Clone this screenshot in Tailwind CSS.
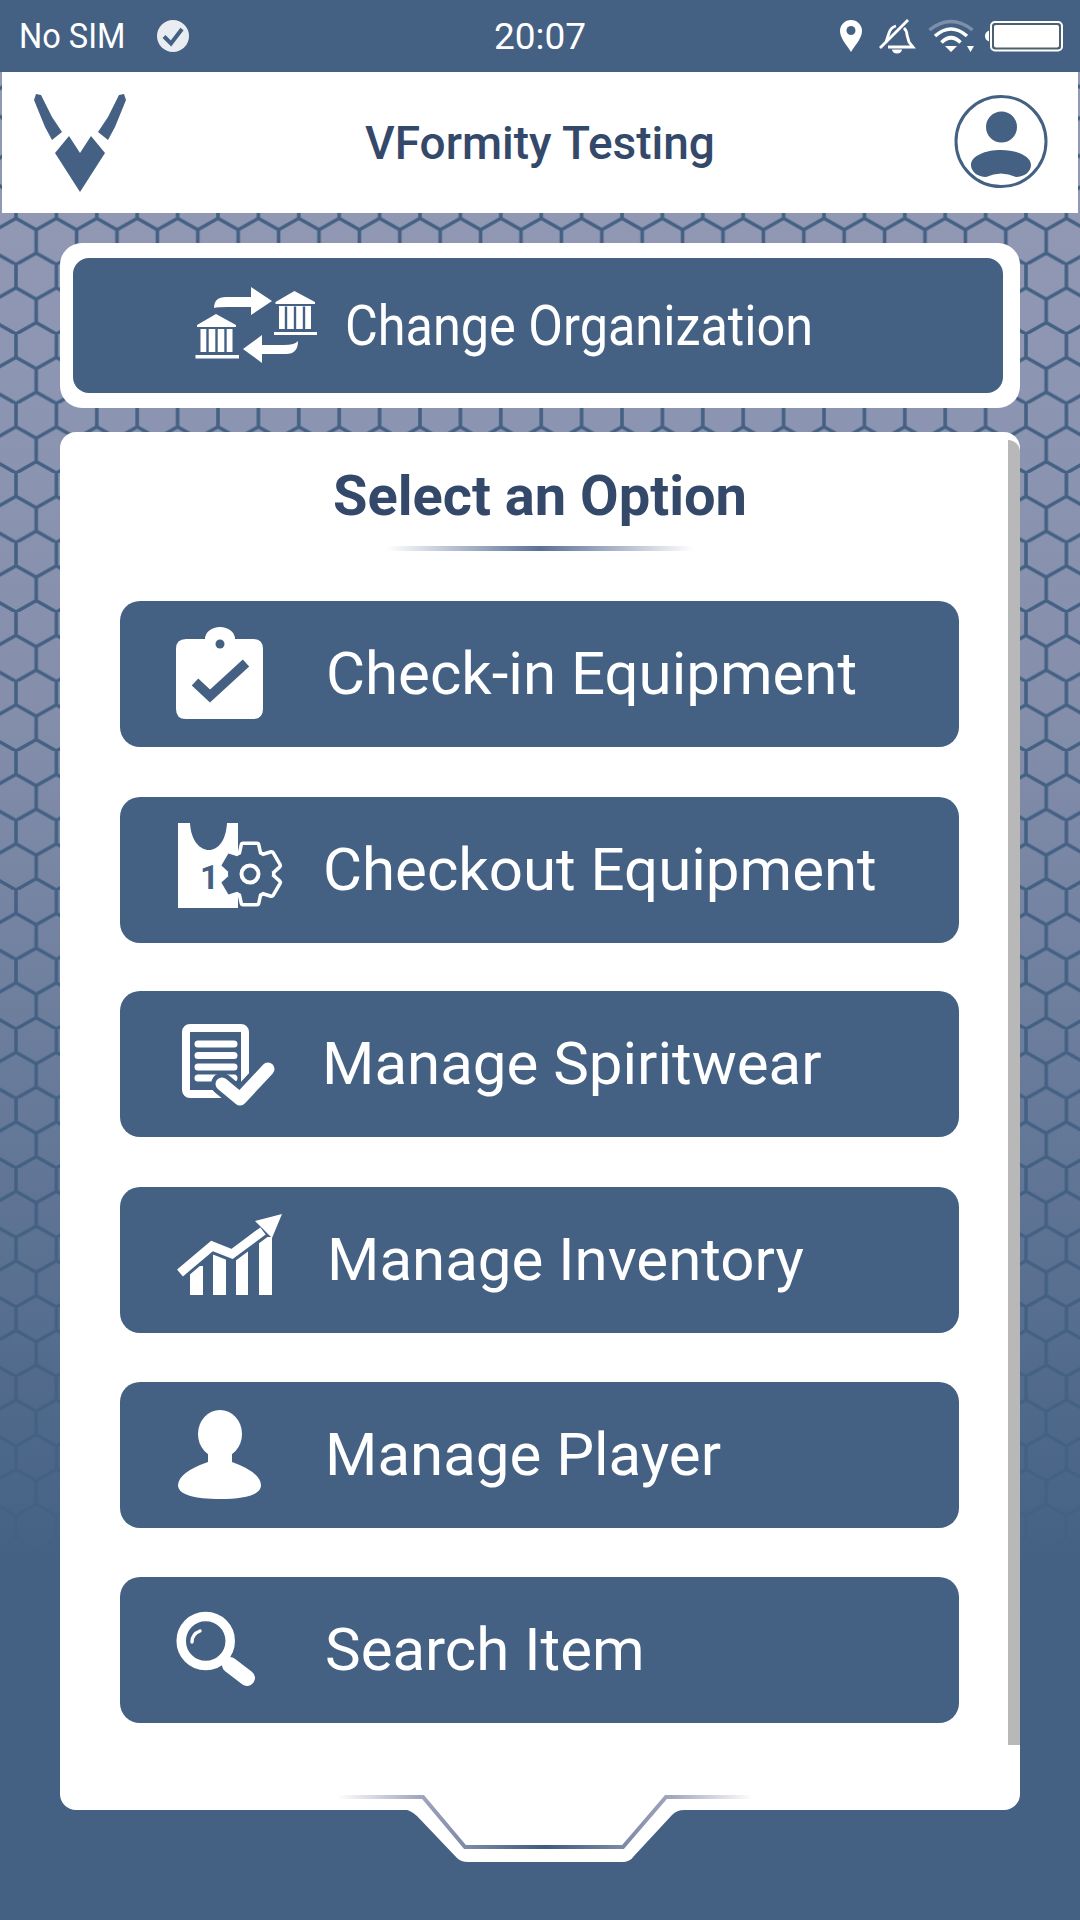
<!DOCTYPE html>
<html lang="en">
<head>
<meta charset="utf-8"/>
<meta content="width=device-width, initial-scale=1.0" name="viewport"/>
<title>VFormity Testing</title>
<script src="https://cdn.jsdelivr.net/npm/@tailwindcss/browser@4"></script>
</head>
<body class="[font-family:Roboto,sans-serif]">
<div class="relative w-[1080px] h-[1920px] overflow-hidden bg-[#446184]">

  <!-- hexagon background -->
  <div class="absolute inset-0 bg-[linear-gradient(to_bottom,#9098b4_213px,#858fac_700px,#446184_1560px)]"></div>
  <svg class="absolute inset-0" width="1080" height="1920">
    <defs>
      <pattern id="hex" patternUnits="userSpaceOnUse" x="16" y="264.5" width="40.4" height="69.5">
        <path d="M0 0V23.3L20.2 34.75V58.05L0 69.5M20.2 58.05L40.4 69.5M40.4 0V23.3L20.2 34.75" fill="none" stroke="#446184" stroke-width="3.6"/>
      </pattern>
    </defs>
    <rect width="1080" height="1920" fill="url(#hex)"/>
  </svg>

  <div class="relative flex flex-col">
    <!-- status bar -->
    <div class="h-[72px] bg-[#446184] flex items-center text-white">
      <div class="w-[240px] flex items-center pl-[19px]">
        <span class="text-[35px] leading-none origin-left scale-x-[.93] inline-block w-[122px] whitespace-nowrap">No SIM</span>
        <svg class="ml-[16px]" width="32" height="32" viewBox="157 20 32 32">
          <circle cx="173" cy="36" r="16" fill="#e9edf2"/>
          <path d="M164 36.5L171 43.5L182 29" fill="none" stroke="#446184" stroke-width="4"/>
        </svg>
      </div>
      <div class="flex-1 text-center text-[37px] leading-none">20:07</div>
      <svg class="shrink-0" width="240" height="72" viewBox="840 0 240 72">
        <path d="M851 52C846 44 840 38 840 31A11 11 0 0 1 862 31C862 38 856 44 851 52Z" fill="#fff"/>
        <circle cx="851" cy="30.5" r="4.5" fill="#446184"/>
        <path d="M908 20L880 48" stroke="#fff" stroke-width="2.8" fill="none"/>
        <path d="M886 42L889 33Q891 27 896 26M904 28Q907 31 907 35L909 42L913 47H888" stroke="#fff" stroke-width="2.8" fill="none"/>
        <path d="M892 49.5H902A5 4 0 0 1 892 49.5Z" fill="#fff"/>
        <path d="M929.5 30Q951 13 972.5 30" stroke="#fff" stroke-opacity=".3" stroke-width="3.5" fill="none"/>
        <path d="M935 36Q951 22 967 36M941.5 42.5Q951 33 960.5 42.5" stroke="#fff" stroke-width="3.6" fill="none"/>
        <path d="M945 46H957L951 52ZM967 46H974L970.5 52Z" fill="#fff"/>
        <rect x="991" y="22" width="71" height="28.5" rx="4" fill="#4d5e6c" stroke="#fff" stroke-width="2"/>
        <rect x="994" y="25" width="65" height="22.5" rx="2" fill="#fff"/>
        <path d="M989 30.5V41.5Q985 40 985 36T989 30.5Z" fill="#fff"/>
      </svg>
    </div>

    <!-- header -->
    <div class="mx-[2px] h-[141px] bg-white flex items-center justify-between">
      <svg width="140" height="141" viewBox="2 72 140 141">
        <path d="M36 94L41 95L52 117L62 132L52 140L45 127L34 100ZM124 94L119 95L108 117L98 132L108 140L115 127L126 100ZM80 192L55 153L69 136L80 153L91 136L105 153Z" fill="#446184"/>
      </svg>
      <div class="text-[46px] leading-none font-medium text-[#34496a] whitespace-nowrap">VFormity Testing</div>
      <svg width="140" height="141" viewBox="938 72 140 141">
        <circle cx="1001" cy="141.5" r="45" fill="none" stroke="#446184" stroke-width="3"/>
        <ellipse cx="1001.5" cy="127" rx="15.5" ry="15.5" fill="#446184"/>
        <path d="M971 165C971 156 985 150 1001 150S1031 156 1031 165C1031 172 1024 177 1016 177Q1001 170 986 177C978 177 971 172 971 165Z" fill="#446184"/>
      </svg>
    </div>

    <!-- change organization -->
    <div class="mt-[30px] mx-[60px] h-[165px] bg-white rounded-[22px] pl-[13px] pr-[17px] py-[15px]">
      <div class="h-full bg-[#446184] rounded-[16px] flex items-center">
        <svg class="shrink-0 ml-[107px]" width="140" height="135" viewBox="180 258 140 135">
          <g fill="#fff">
            <path d="M275.5 302L294.4 291L315 302V304H275.5ZM279 306H311V329H279ZM274 332H317V335H274Z"/>
            <path d="M197 325L216 314L236 325V327H197ZM200.5 329H232.5V352H200.5ZM195.5 355H239V358.5H195.5Z"/>
            <path d="M214 308Q214 297 226 297H251V287L272 301L251 315V307H228Q217 307 214 308Z"/>
            <path d="M298 341Q298 354 286 354H262V363L243 349L262 335V345H284Q295 345 298 341Z"/>
          </g>
          <path d="M286 306.5V329M295 306.5V329M304 306.5V329M207.5 329V352M216.5 329V352M225.5 329V352" stroke="#446184" stroke-width="2.4"/>
        </svg>
        <span class="ml-[25px] text-[56px] leading-none text-white inline-block origin-left scale-x-[.9] whitespace-nowrap">Change Organization</span>
      </div>
    </div>

    <!-- options card -->
    <div class="relative mt-[24px] mx-[60px] h-[1378px] bg-white rounded-[16px]">
      <div class="absolute right-0 top-[8px] w-[12px] h-[1305px] bg-[#b8b8b8] rounded-tr-[12px]"></div>
      <h2 class="pt-[36px] text-center text-[56px] leading-[56px] font-bold text-[#34496a]">Select an Option</h2>
      <div class="mt-[22px] mx-auto w-[308px] h-[5px] bg-[linear-gradient(to_right,transparent,#5b7095,transparent)]"></div>

      <div class="mt-[50px] ml-[60px] w-[839px] flex flex-col text-white">
        <div class="h-[146px] bg-[#446184] rounded-[20px] flex items-center">
          <svg class="ml-[20px] shrink-0" width="180" height="146" viewBox="140 600 180 146">
            <path d="M186 638H205A15 12 0 0 1 235 638H253Q263 638 263 648V708Q263 718 253 718H186Q176 718 176 708V648Q176 638 186 638Z" fill="#fff"/>
            <circle cx="220" cy="643" r="4.5" fill="#446184"/>
            <path d="M195 681L210 695L246 662" fill="none" stroke="#446184" stroke-width="9.5"/>
          </svg>
          <span class="ml-[6px] text-[60px] leading-none whitespace-nowrap">Check-in Equipment</span>
        </div>

        <div class="mt-[50px] h-[146px] bg-[#446184] rounded-[20px] flex items-center">
          <svg class="ml-[20px] shrink-0" width="180" height="146" viewBox="140 796 180 146">
            <defs>
              <g id="gear">
                <circle r="22"/>
                <path id="tooth" d="M-9 -20L-7 -29H7L9 -20Z"/>
                <use href="#tooth" transform="rotate(60)"/>
                <use href="#tooth" transform="rotate(120)"/>
                <use href="#tooth" transform="rotate(180)"/>
                <use href="#tooth" transform="rotate(240)"/>
                <use href="#tooth" transform="rotate(300)"/>
              </g>
            </defs>
            <path d="M178 822H190C191 840 200 849 209 849C218 849 226 840 227 822H238V907H178Z" fill="#fff"/>
            <text x="200" y="888" font-family="Roboto" font-weight="700" font-size="33" fill="#446184">1</text>
            <use href="#gear" transform="translate(250 873)" fill="#fff" stroke="#fff" stroke-width="7" stroke-linejoin="round"/>
            <use href="#gear" transform="translate(250 873)" fill="#446184"/>
            <circle cx="250" cy="873" r="8.5" fill="none" stroke="#fff" stroke-width="4"/>
          </svg>
          <span class="ml-[3px] text-[60px] leading-none whitespace-nowrap">Checkout Equipment</span>
        </div>

        <div class="mt-[48px] h-[146px] bg-[#446184] rounded-[20px] flex items-center">
          <svg class="ml-[20px] shrink-0" width="180" height="146" viewBox="140 990 180 146">
            <rect x="186" y="1027" width="59" height="66" rx="4" fill="none" stroke="#fff" stroke-width="8"/>
            <path d="M198 1043H234M198 1054.5H234M198 1066H234M198 1077H234" stroke="#fff" stroke-width="7" stroke-linecap="round"/>
            <path d="M222 1083L240 1098L268 1068" fill="none" stroke="#446184" stroke-width="22" stroke-linecap="round" stroke-linejoin="round"/>
            <path d="M222 1083L240 1098L268 1068" fill="none" stroke="#fff" stroke-width="13" stroke-linecap="round" stroke-linejoin="round"/>
          </svg>
          <span class="ml-[2px] text-[60px] leading-none whitespace-nowrap">Manage Spiritwear</span>
        </div>

        <div class="mt-[50px] h-[146px] bg-[#446184] rounded-[20px] flex items-center">
          <svg class="ml-[20px] shrink-0" width="180" height="146" viewBox="140 1186 180 146">
            <path d="M190 1265H203V1294H190ZM213 1250H226V1294H213ZM236 1250H248V1294H236ZM259 1236H272V1294H259Z" fill="#fff"/>
            <path d="M180 1272L212 1245L232 1253L263 1230" fill="none" stroke="#446184" stroke-width="15"/>
            <path d="M180 1272L212 1245L232 1253L263 1230" fill="none" stroke="#fff" stroke-width="9"/>
            <path d="M282 1213L255 1220L272 1237Z" fill="#fff"/>
          </svg>
          <span class="ml-[7px] text-[60px] leading-none whitespace-nowrap">Manage Inventory</span>
        </div>

        <div class="mt-[49px] h-[146px] bg-[#446184] rounded-[20px] flex items-center">
          <svg class="ml-[20px] shrink-0" width="180" height="146" viewBox="140 1381 180 146">
            <ellipse cx="220" cy="1433" rx="22" ry="24" fill="#fff"/>
            <path d="M208 1450V1461Q179 1471 178 1484C178 1494 195 1498 220 1498S261 1494 261 1484Q260 1471 232 1461V1450Z" fill="#fff"/>
          </svg>
          <span class="ml-[5px] text-[60px] leading-none whitespace-nowrap">Manage Player</span>
        </div>

        <div class="mt-[49px] h-[146px] bg-[#446184] rounded-[20px] flex items-center">
          <svg class="ml-[20px] shrink-0" width="180" height="146" viewBox="140 1576 180 146">
            <circle cx="205.7" cy="1640" r="24.5" fill="none" stroke="#fff" stroke-width="9.5"/>
            <path d="M192 1641Q192 1633 200 1630" fill="none" stroke="#fff" stroke-width="3.4" stroke-linecap="round"/>
            <path d="M224 1659L230 1664" stroke="#fff" stroke-width="10"/>
            <path d="M230 1664L247 1677" stroke="#fff" stroke-width="16" stroke-linecap="round"/>
          </svg>
          <span class="ml-[5px] text-[60px] leading-none whitespace-nowrap">Search Item</span>
        </div>
      </div>
    </div>
  </div>

  <!-- notch under the card -->
  <svg class="absolute inset-0 pointer-events-none" width="1080" height="1920">
    <defs>
      <linearGradient id="notchLine" gradientUnits="userSpaceOnUse" x1="337" y1="0" x2="753" y2="0">
        <stop offset="0" stop-color="#a0a6bd" stop-opacity="0"/>
        <stop offset=".2" stop-color="#a0a6bd"/>
        <stop offset=".5" stop-color="#3f5a80"/>
        <stop offset=".8" stop-color="#a0a6bd"/>
        <stop offset="1" stop-color="#a0a6bd" stop-opacity="0"/>
      </linearGradient>
    </defs>
    <path d="M400 1808Q411 1810 417 1816L457 1858Q461 1862 468 1862H622Q630 1862 634 1856L672 1815Q677 1810 684 1810V1800H400Z" fill="#fff"/>
    <path d="M337 1797H423L465 1847H623L666 1797H753" fill="none" stroke="url(#notchLine)" stroke-width="4"/>
  </svg>
</div>
</body>
</html>
